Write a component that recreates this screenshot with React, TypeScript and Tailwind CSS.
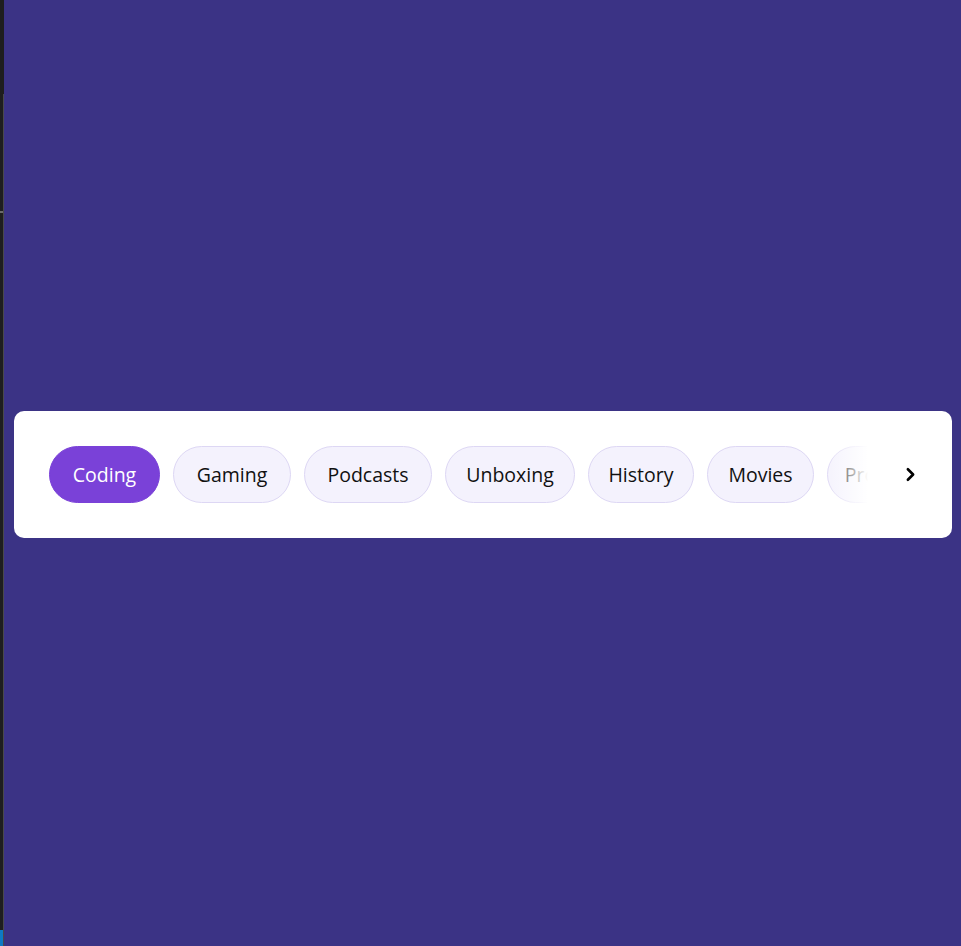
import { ChevronRight } from "lucide-react";

const tags = [
    { label: "Coding", w: "w-[111px]" },
    { label: "Gaming", w: "w-[118px]" },
    { label: "Podcasts", w: "w-[128px]" },
    { label: "Unboxing", w: "w-[130px]" },
    { label: "History", w: "w-[106px]" },
    { label: "Movies", w: "w-[107px]" },
    { label: "Programming", w: "w-[160px]" },
    { label: "Music", w: "w-[100px]" },
];

function EditorEdge() {
    return (
        <div className="w-[4px] shrink-0 h-full flex flex-col bg-[#1e1e1e]">
            <div className="h-[94px]" />
            <div className="flex-1 flex flex-col border-r border-[#4a4a4a]">
                <div className="h-[117px]" />
                <div className="h-[2px] bg-[#6b6b6b]" />
                <div className="flex-1" />
                <div className="h-[16px] bg-[#0e7ac4]" />
            </div>
        </div>
    );
}

export default function App() {
    return (
        <div className="w-full h-[946px] flex overflow-hidden" style={{ fontFamily: '"Open Sans", "Liberation Sans", sans-serif' }}>
            <EditorEdge />
            <div className="flex-1 min-w-0 bg-[#3b3385] flex items-center pl-[10px] pr-[9px]">
                <div className="w-full h-[127px] mt-[3px] bg-white rounded-[10px] flex items-center pl-[35px]">
                    <div className="relative flex-1 min-w-0 overflow-hidden">
                        <div className="flex gap-[13px]">
                            {tags.map((t, i) => (
                                <button
                                    key={t.label}
                                    className={`${t.w} shrink-0 h-[57px] rounded-full flex items-center justify-center text-[19.5px] ${
                                        i === 0
                                            ? "bg-[#7a41d8] text-white border border-[#7a41d8]"
                                            : "bg-[#f4f2fd] text-[#111] border border-[#ddd7f4]"
                                    }`}
                                >
                                    {t.label}
                                </button>
                            ))}
                        </div>
                        <div className="absolute top-0 right-0 h-full w-[45px] bg-gradient-to-r from-white/0 to-white" />
                    </div>
                    <div className="w-[84px] shrink-0 h-full flex items-center justify-center">
                        <ChevronRight size={21} strokeWidth={3} className="text-black" />
                    </div>
                </div>
            </div>
        </div>
    );
}
